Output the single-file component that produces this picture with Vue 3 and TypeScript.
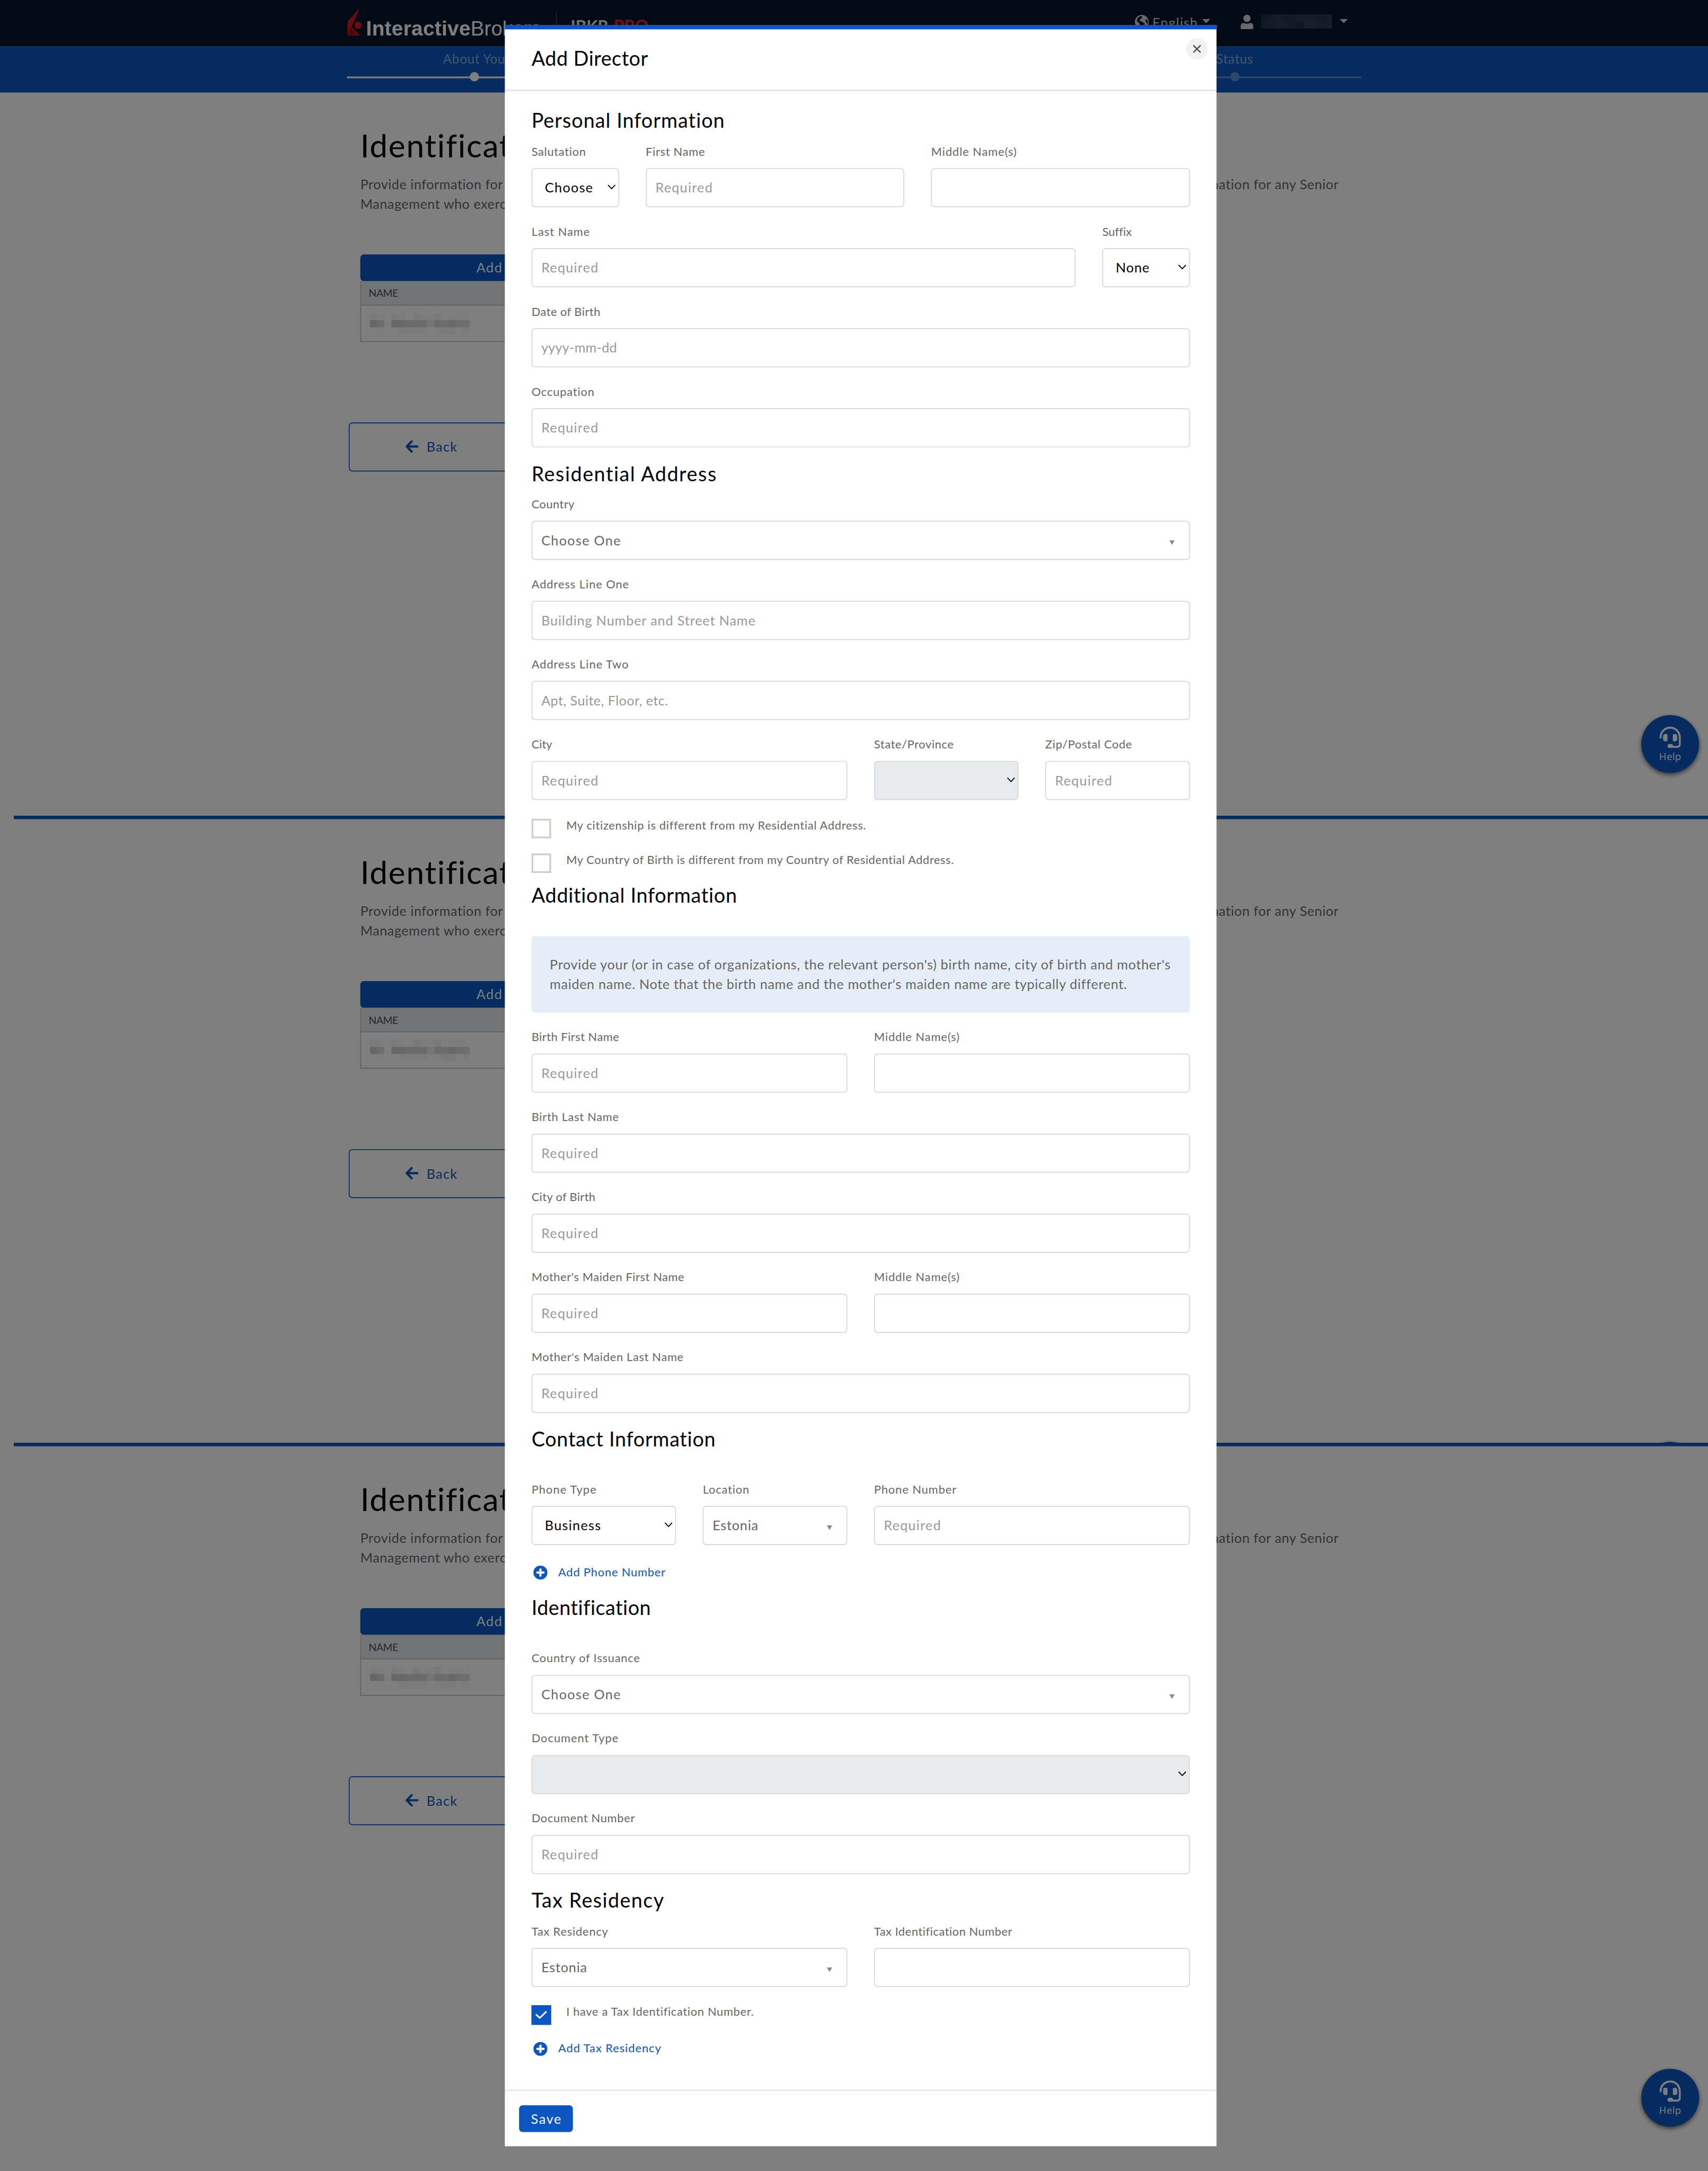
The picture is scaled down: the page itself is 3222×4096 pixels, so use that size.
<script setup lang="ts">
type Kind = 'input' | 'select' | 'combo'

interface Field {
  label: string
  track: number
  span: number
  kind?: Kind
  text?: string
  textTrack?: number
  disabled?: boolean
}

interface Check {
  text: string
  track: number
  checked?: boolean
}

interface Section {
  id: string
  title: string
  track: number
  note?: string[]
  rows: Field[][]
  checks?: Check[]
  link?: { text: string; track: number }
}

const REQ = { text: 'Required', textTrack: 1.5 }

const sections: Section[] = [
  {
    id: 'personal',
    title: 'Personal Information',
    track: 1.2,
    rows: [
      [
        { label: 'Salutation', track: 0.84, span: 2, kind: 'select', text: 'Choose', textTrack: 1.6 },
        { label: 'First Name', track: 0.86, span: 5, ...REQ },
        { label: 'Middle Name(s)', track: 1.12, span: 5 },
      ],
      [
        { label: 'Last Name', track: 1.21, span: 10, ...REQ },
        { label: 'Suffix', track: 0.04, span: 2, kind: 'select', text: 'None', textTrack: 1.15 },
      ],
      [{ label: 'Date of Birth', track: 0.57, span: 12, text: 'yyyy-mm-dd', textTrack: 0.3 }],
      [{ label: 'Occupation', track: 1.01, span: 12, ...REQ }],
    ],
  },
  {
    id: 'address',
    title: 'Residential Address',
    track: 1.8,
    rows: [
      [{ label: 'Country', track: 0.59, span: 12, kind: 'combo', text: 'Choose One', textTrack: 1.6 }],
      [{ label: 'Address Line One', track: 1.14, span: 12, text: 'Building Number and Street Name', textTrack: 1.05 }],
      [{ label: 'Address Line Two', track: 1.18, span: 12, text: 'Apt, Suite, Floor, etc.', textTrack: 0.55 }],
      [
        { label: 'City', track: 0, span: 6, ...REQ },
        { label: 'State/Province', track: 0.74, span: 3, kind: 'select', disabled: true },
        { label: 'Zip/Postal Code', track: 0.76, span: 3, ...REQ },
      ],
    ],
    checks: [
      { text: 'My citizenship is different from my Residential Address.', track: 0.82 },
      { text: 'My Country of Birth is different from my Country of Residential Address.', track: 0.7 },
    ],
  },
  {
    id: 'additional',
    title: 'Additional Information',
    track: 0.85,
    note: [
      "Provide your (or in case of organizations, the relevant person's) birth name, city of birth and mother's",
      "maiden name. Note that the birth name and the mother's maiden name are typically different.",
    ],
    rows: [
      [
        { label: 'Birth First Name', track: 0.6, span: 6, ...REQ },
        { label: 'Middle Name(s)', track: 1.12, span: 6 },
      ],
      [{ label: 'Birth Last Name', track: 0.86, span: 12, ...REQ }],
      [{ label: 'City of Birth', track: 0.44, span: 12, ...REQ }],
      [
        { label: "Mother's Maiden First Name", track: 0.7, span: 6, ...REQ },
        { label: 'Middle Name(s)', track: 1.12, span: 6 },
      ],
      [{ label: "Mother's Maiden Last Name", track: 0.82, span: 12, ...REQ }],
    ],
  },
  {
    id: 'contact',
    title: 'Contact Information',
    track: 0.85,
    rows: [
      [
        { label: 'Phone Type', track: 1.3, span: 3, kind: 'select', text: 'Business', textTrack: 1.55 },
        { label: 'Location', track: 1, span: 3, kind: 'combo', text: 'Estonia', textTrack: 0.95 },
        { label: 'Phone Number', track: 1.1, span: 6, ...REQ },
      ],
    ],
    link: { text: 'Add Phone Number', track: 0.98 },
  },
  {
    id: 'identification',
    title: 'Identification',
    track: 0.6,
    rows: [
      [{ label: 'Country of Issuance', track: 0.97, span: 12, kind: 'combo', text: 'Choose One', textTrack: 1.6 }],
      [{ label: 'Document Type', track: 1.2, span: 12, kind: 'select', disabled: true }],
      [{ label: 'Document Number', track: 0.87, span: 12, ...REQ }],
    ],
  },
  {
    id: 'tax',
    title: 'Tax Residency',
    track: 1.68,
    rows: [
      [
        { label: 'Tax Residency', track: 0.97, span: 6, kind: 'combo', text: 'Estonia', textTrack: 0.95 },
        { label: 'Tax Identification Number', track: 0.63, span: 6 },
      ],
    ],
    checks: [{ text: 'I have a Tax Identification Number.', track: 0.81, checked: true }],
    link: { text: 'Add Tax Residency', track: 1.14 },
  },
]

const pages = ['first', 'second', 'third']

// Opacity of each 16px cell in the redacted table name
const nameMask: number[][] = [
  [0.04, 0.02, 0, 0.04, 0.02, 0, 0.05, 0.02, 0.02, 0.05, 0, 0.02, 0.02, 0.02],
  [0.2, 0.14, 0.02, 0.18, 0.18, 0.16, 0.16, 0.16, 0.07, 0.16, 0.15, 0.18, 0.15, 0.13],
  [0, 0.02, 0, 0, 0.03, 0.03, 0.03, 0.03, 0, 0.02, 0.04, 0.04, 0, 0.03],
]
const userMask: number[][] = [
  [0.13, 0.16, 0.2, 0.17, 0.17, 0.19, 0.19, 0.19, 0.18, 0.19],
  [0.17, 0.18, 0.2, 0.2, 0.16, 0.15, 0.22, 0.22, 0.19, 0.2],
]

const px = (n?: number) => ({ letterSpacing: `${n ?? 0}px` })
</script>

<template>
  <div class="viewport">
    <div class="stage">
      <header class="topbar">
        <svg class="flame" viewBox="0 0 33 64" width="33" height="64">
          <path d="M28 0 0 32V63L10 42Z" fill="#dc1424" />
          <path d="M0 63 9 42 28 63Z" fill="#a00d1a" />
          <path d="M9 42 28 63H18Z" fill="#c8101f" />
          <circle cx="24" cy="40" r="8.3" fill="#dc1424" />
        </svg>
        <div class="wordmark"><b>Interactive</b><span>Brokers</span></div>
        <div class="product"><span>IBKR</span><em>PRO</em></div>
        <div class="account">
          <svg class="globe" viewBox="0 0 32 32" width="32" height="32">
            <circle cx="16" cy="16" r="15.5" fill="#d2d2d6" />
            <path d="M5 11c2-4 5-7 9-8l3 1-1 4-4 2-1 4 5 1 3 3 4 2-1 4-4 4-2 3-3-1 1-5-3-3-1-4-4-2ZM26 9l4 6-1 6-3-3-2-4Z" fill="#04142a" />
          </svg>
          <span class="lang">English</span>
          <i class="tri"></i>
          <svg class="user" viewBox="0 0 29 33" width="29" height="33">
            <circle cx="14.5" cy="8.3" r="8.2" fill="#d2d2d6" />
            <path d="M6 18.500q8.500 3.500 17 0q6 1 6 9v2.500q0 2.500-3 2.500H3q-3 0-3-2.500V27.500q0-8 6-9Z" fill="#d2d2d6" />
          </svg>
          <div class="mask">
            <div v-for="(row, r) in userMask" :key="r" class="mask-row">
              <i v-for="(o, c) in row" :key="c" class="light" :style="{ opacity: o }"></i>
            </div>
          </div>
          <i class="tri last"></i>
        </div>
      </header>

      <nav class="steps">
        <div class="step on"><span>About You</span><i></i></div>
        <div class="step mid"></div>
        <div class="step off"><span>Status</span><i></i></div>
      </nav>

      <section v-for="p in pages" :key="p" class="page" :class="p">
        <div v-if="p !== 'first'" class="rule"></div>
        <div class="content">
          <h1>Identificat</h1>
          <div class="lead">
            <p>Provide information for<br />Management who exerc</p>
            <p>nation for any Senior</p>
          </div>
          <div class="add">Add</div>
          <div class="table">
            <div class="th">NAME</div>
            <div class="td">
              <div v-for="(row, r) in nameMask" :key="r" class="mask-row">
                <i v-for="(o, c) in row" :key="c" :style="{ opacity: o }"></i>
              </div>
            </div>
          </div>
          <div class="back">
            <svg viewBox="0 0 30 28" width="30" height="28">
              <path d="M14.500 2.500 3.500 14l11 11.500M4 14h23.500" fill="none" stroke="#0b56c1" stroke-width="5" stroke-linecap="round" stroke-linejoin="round" />
            </svg>
            <span>Back</span>
          </div>
        </div>
        <div class="help">
          <template v-if="p !== 'second'">
            <svg viewBox="0 0 48 48" width="48" height="48">
              <path d="M2.300 24.600V24a21.700 21.700 0 0 1 43.400 0v15q0 6.300-6.300 6.300H26" fill="none" stroke="#fff" stroke-width="4.400" stroke-linecap="round" />
              <path d="M13.500 16.500H15q3 0 3 3V30q0 3-3 3h-1.500Q8 33 8 27.500V22q0-5.500 5.500-5.500ZM33 16.500h1.500Q40 16.500 40 22v5.500Q40 33 34.500 33H33q-3 0-3-3V19.500q0-3 3-3Z" fill="#fff" />
              <rect x="18" y="39" width="12.500" height="9" rx="4.500" fill="#fff" />
            </svg>
            <span>Help</span>
          </template>
        </div>
      </section>

      <div class="overlay"></div>

      <div class="modal">
        <div class="modal-head">
          <h2>Add Director</h2>
          <button class="close">
            <svg viewBox="0 0 18 18" width="18" height="18">
              <path d="M1.500 1.500 16.500 16.500M16.500 1.500 1.500 16.500" stroke="#555" stroke-width="3" stroke-linecap="round" />
            </svg>
          </button>
        </div>

        <div class="modal-body">
          <section v-for="s in sections" :key="s.id" class="group" :class="s.id">
            <h3 :style="px(s.track)">{{ s.title }}</h3>
            <div v-if="s.note" class="note">
              <div v-for="line in s.note" :key="line">{{ line }}</div>
            </div>
            <div class="rows">
              <div v-for="(row, r) in s.rows" :key="r" class="row">
                <div v-for="(f, i) in row" :key="i" class="field" :class="'span-' + f.span">
                  <label :style="px(f.track)">{{ f.label }}</label>
                  <div class="control" :class="[f.kind ?? 'input', { disabled: f.disabled }]">
                    <span :style="px(f.textTrack)">{{ f.text }}</span>
                    <svg v-if="f.kind === 'select'" viewBox="0 0 18 12" width="18" height="12">
                      <path d="M1.500 1.500 9 9.500 16.500 1.500" fill="none" stroke="#000" stroke-width="2.200" stroke-linecap="round" stroke-linejoin="round" />
                    </svg>
                    <i v-else-if="f.kind === 'combo'" class="caret"></i>
                  </div>
                </div>
              </div>
            </div>
            <div v-if="s.checks" class="checks">
              <div v-for="c in s.checks" :key="c.text" class="check">
                <div class="box" :class="{ checked: c.checked }">
                  <svg v-if="c.checked" viewBox="0 0 28 20" width="28" height="20">
                    <path d="M3 9.500 10.500 16.500 24.500 3" fill="none" stroke="#fff" stroke-width="3.600" stroke-linecap="round" stroke-linejoin="round" />
                  </svg>
                </div>
                <span :style="px(c.track)">{{ c.text }}</span>
              </div>
            </div>
            <div v-if="s.link" class="link">
              <svg viewBox="0 0 32 32" width="32" height="32">
                <circle cx="16" cy="16" r="15.700" fill="#0b56c1" />
                <path d="M16 9v14M9 16h14" stroke="#fff" stroke-width="5" stroke-linecap="round" />
              </svg>
              <span :style="px(s.link.track)">{{ s.link.text }}</span>
            </div>
          </section>
        </div>

        <div class="modal-foot"><button class="save">Save</button></div>
      </div>
    </div>
  </div>
</template>

<style>
body {
  background: #808080;
}
</style>

<style scoped>
.viewport {
  width: 3222px;
  height: 4096px;
  overflow: hidden;
}
.stage {
  position: relative;
  width: 3840px;
  height: 4882px;
  transform: scale(0.8390625);
  transform-origin: 0 0;
  background: #fff;
  font-family: Lato, "Open Sans", sans-serif;
  font-size: 30px;
  color: #666;
  overflow: hidden;
}
.stage * {
  box-sizing: border-box;
}
h1,
h2,
h3,
p {
  margin: 0;
  font-weight: 400;
  color: #000;
}
button {
  border: 0;
  padding: 0;
  font: inherit;
}
svg {
  display: block;
  flex: none;
}

/* top bar */
.topbar {
  display: flex;
  align-items: flex-start;
  height: 104px;
  padding: 0 810px 0 781px;
  background: #04142a;
  border-bottom: 2px solid #000;
}
.flame {
  margin-top: 17px;
}
.wordmark {
  width: 427px;
  margin: 38px 0 0 9px;
  font: 46px/52px "Liberation Sans", Arial, sans-serif;
  color: #fff;
  white-space: nowrap;
}
.wordmark b {
  letter-spacing: 0.45px;
}
.product {
  display: flex;
  height: 60px;
  margin-top: 27px;
  padding: 9px 0 0 31px;
  border-left: 2px solid rgba(255, 255, 255, 0.22);
  font-size: 37px;
  line-height: 44px;
  font-weight: 700;
  color: #e6e6e6;
}
.product em {
  margin-left: 12px;
  font-size: 38px;
  font-style: normal;
  color: #e02434;
}
.account {
  display: flex;
  align-items: flex-start;
  margin-left: auto;
  color: #d2d2d6;
}
.globe {
  margin-top: 33px;
}
.lang {
  width: 120px;
  padding-left: 8px;
  margin-top: 28px;
  line-height: 44px;
  letter-spacing: 1.3px;
}
.tri {
  width: 0;
  margin-top: 43px;
  border: 9.5px solid transparent;
  border-top-color: #d2d2d6;
  border-bottom: 0;
}
.user {
  margin: 33px 0 0 68px;
}
.mask {
  width: 194px;
  padding: 32px 0 0 17px;
}
.mask-row {
  display: flex;
}
.mask-row i {
  width: 16px;
  height: 16px;
  background: #000;
}
.mask-row i.light {
  background: #d8d8f0;
}

/* progress steps */
.steps {
  display: flex;
  height: 104px;
  padding: 0 780px;
  background: #0b56c1;
}
.step {
  display: flex;
  flex-direction: column;
  align-items: center;
  width: 572px;
  height: 72px;
  padding-top: 10px;
  border-bottom: 4px solid #fff;
  font-size: 29px;
  line-height: 44px;
  letter-spacing: 0.8px;
  color: rgba(255, 255, 255, 0.5);
}
.step span {
  margin-top: -4px;
}
.step i {
  flex: none;
  width: 21px;
  height: 21px;
  margin-top: 8px;
  border-radius: 50%;
  background: #fff;
}
.step.mid {
  width: 1140px;
}
.step.off {
  width: 568px;
  border-color: #598ed6;
}
.step.off i {
  background: #598ed6;
}

/* page repeated behind the dialog */
.page {
  position: relative;
  height: 1410px;
  overflow: hidden;
}
.page.first {
  height: 1626px;
}
.page.third {
  height: 1638px;
}
.rule {
  height: 8px;
  margin-left: 31px;
  background: #0b56c1;
}
.content {
  width: 3010px;
  padding: 75px 0 0 810px;
}
h1 {
  font-size: 72px;
  line-height: 86px;
  letter-spacing: 2px;
}
.lead {
  display: flex;
  justify-content: space-between;
  height: 88px;
  margin: 22px 0 93px;
}
.lead p {
  line-height: 44px;
  letter-spacing: 0.65px;
  color: #666;
}
.add {
  width: 700px;
  height: 60px;
  padding-left: 261px;
  border-radius: 8px;
  background: #0b56c1;
  color: #fff;
  line-height: 58px;
  letter-spacing: 1.9px;
}
.table {
  width: 700px;
  height: 137px;
  border: 2px solid #bcbcc0;
  border-top: 0;
}
.th {
  height: 55px;
  padding-left: 17px;
  border-top: 2px solid #d4d6d8;
  border-bottom: 2px solid #c0c2c6;
  background: #e6e9ed;
  color: #4d4d4d;
  font-size: 23px;
  line-height: 50px;
  letter-spacing: -0.5px;
}
.td {
  padding: 17px 0 0 20px;
}
.back {
  display: flex;
  align-items: center;
  width: 372px;
  height: 110px;
  margin: 181px 0 0 -26px;
  padding: 0 0 2px 125px;
  border: 2px solid #0b56c1;
  border-radius: 8px;
  color: #0b56c1;
}
.back span {
  margin-left: 18px;
  letter-spacing: 1.6px;
}
.help {
  position: absolute;
  right: 20px;
  top: 1400px;
  display: flex;
  flex-direction: column;
  align-items: center;
  width: 130px;
  height: 130px;
  padding-top: 26px;
  border-radius: 50%;
  background: #0b56c1;
  box-shadow: 0 4px 10px rgba(0, 0, 0, 0.6);
  color: #fff;
  font: 22px/30px "Open Sans", sans-serif;
  letter-spacing: 0.5px;
}
.help span {
  margin-top: 3px;
}
.second .help,
.third .help {
  top: 1408px;
}

.overlay {
  position: absolute;
  inset: 0;
  background: rgba(0, 0, 0, 0.5);
}

/* dialog */
.modal {
  position: absolute;
  left: 1135px;
  top: 56px;
  width: 1600px;
  height: 4770px;
  display: flex;
  flex-direction: column;
  border-top: 10px solid #0b56c1;
  background: #fff;
}
.modal-head {
  display: flex;
  justify-content: space-between;
  height: 138px;
  padding: 20px 20px 0 60px;
  border-bottom: 2px solid #d6d6d6;
}
h2 {
  margin-top: 19px;
  font-size: 45px;
  line-height: 52px;
  letter-spacing: 0.6px;
}
.close {
  display: flex;
  align-items: center;
  justify-content: center;
  width: 48px;
  height: 48px;
  border-radius: 50%;
  background: #f2f2f2;
}
.modal-body {
  flex: 1;
  padding: 40px 60px 0;
}
.group {
  margin-bottom: 32px;
}
h3 {
  margin-bottom: 29px;
  font-size: 45px;
  line-height: 52px;
  white-space: nowrap;
}
.rows {
  display: flex;
  flex-direction: column;
  gap: 39px;
}
.row {
  display: grid;
  grid-template-columns: repeat(12, minmax(0, 1fr));
  column-gap: 60px;
}
.span-2 {
  grid-column: span 2;
}
.span-3 {
  grid-column: span 3;
}
.span-5 {
  grid-column: span 5;
}
.span-6 {
  grid-column: span 6;
}
.span-10 {
  grid-column: span 10;
}
.span-12 {
  grid-column: span 12;
}
label {
  display: block;
  height: 32px;
  margin-bottom: 21px;
  font-size: 26px;
  line-height: 30px;
  white-space: nowrap;
}
.control {
  display: flex;
  align-items: center;
  justify-content: space-between;
  height: 88px;
  padding: 0 20px 2px;
  border: 2px solid #d6d6d6;
  border-radius: 8px;
  background: #fff;
  color: #999;
}
.control.select {
  padding: 0 6px 2px 28px;
  color: #000;
}
.control.combo {
  padding-right: 32px;
  color: #666;
}
.control.disabled {
  background: #e7ebee;
}
.caret {
  margin-top: 12px;
  border: 6.5px solid transparent;
  border-top: 10px solid #888;
  border-bottom: 0;
}
.address h3 {
  margin-bottom: 27px;
}
.personal {
  margin-bottom: 33px;
}
.address {
  margin-bottom: 24px;
}
.additional h3 {
  margin-bottom: 66px;
}
.contact h3 {
  margin-bottom: 72px;
}
.identification h3 {
  margin-bottom: 73px;
}
.note {
  height: 172px;
  margin-bottom: 39px;
  padding: 41px 0 0 41px;
  border-radius: 8px;
  background: #e5edf7;
  line-height: 44px;
  letter-spacing: 0.81px;
  white-space: nowrap;
}
.checks {
  display: flex;
  flex-direction: column;
  gap: 34px;
  margin-top: 42px;
}
.check {
  display: flex;
  height: 44px;
}
.check span {
  margin-left: 34px;
  font-size: 26px;
  line-height: 29px;
}
.box {
  display: flex;
  align-items: center;
  justify-content: center;
  width: 44px;
  height: 44px;
  border: 4px solid #d2cdc6;
}
.box.checked {
  border-color: #0b56c1;
  background: #0b56c1;
}
.link {
  display: flex;
  align-items: center;
  height: 40px;
  margin-top: 42px;
  padding-left: 4px;
  color: #0b56c1;
  font-size: 26px;
}
.link span {
  height: 40px;
  margin-left: 24px;
  line-height: 36px;
}
.tax .checks {
  margin-top: 41px;
}
.tax .link {
  margin-top: 34px;
}
.modal-foot {
  height: 127px;
  padding: 33px 0 0 32px;
  border-top: 2px solid #dcdce2;
}
.save {
  width: 121px;
  height: 60px;
  padding-left: 2px;
  border-radius: 8px;
  background: #0b56c1;
  color: #fff;
  line-height: 56px;
  letter-spacing: 2.1px;
}
</style>
